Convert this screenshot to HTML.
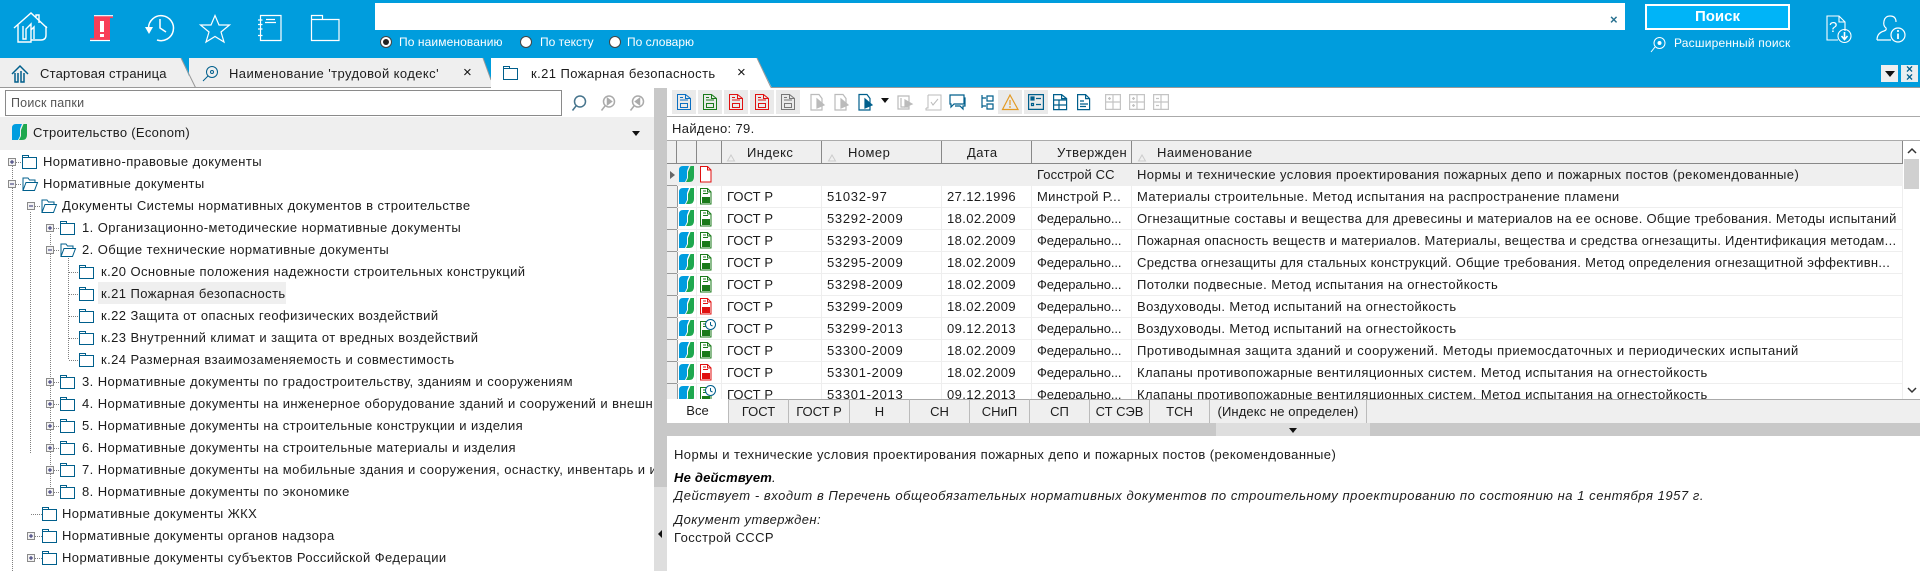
<!DOCTYPE html>
<html><head><meta charset="utf-8"><style>
html,body{margin:0;padding:0;width:1920px;height:571px;overflow:hidden;background:#fff}
body{position:relative;font-family:"Liberation Sans",sans-serif;font-size:13px;color:#1c1c1c}
.a{position:absolute}
.t{position:absolute;white-space:nowrap;line-height:16px;height:16px}
.w{color:#fff;font-size:12px}
svg{position:absolute;overflow:visible}
#tree,#grid{position:absolute;overflow:hidden}
#tree{left:0;top:150px;width:654px;height:421px}
#tree .t{font-size:13px;letter-spacing:.42px}
#grid{left:667px;top:141px;width:1236px;height:258px}
#grid .t{font-size:13px;letter-spacing:.1px;margin-top:1px}
#grid .hd{letter-spacing:.45px;margin-top:0}
#grid .n{letter-spacing:.7px}
#grid .d{letter-spacing:.4px}
#grid .f{letter-spacing:-.1px}
#grid .s{letter-spacing:.42px}
#grid .l{letter-spacing:.3px}
.h{background:#efefef;height:23px;top:0;border-right:1px solid #888;border-bottom:1px solid #888;position:absolute;box-sizing:border-box}
.tb{position:absolute;top:399px;height:24px;background:#efefef;border-right:1px solid #bbb;font-size:13px;text-align:center;line-height:24px;box-sizing:border-box;border-top:1px solid #aaa}
.v{position:absolute;width:1px;background:repeating-linear-gradient(#808080 0 1px,transparent 1px 2px)}
.z{position:absolute;height:1px;background:repeating-linear-gradient(90deg,#808080 0 1px,transparent 1px 2px)}
.dt{position:absolute;font-size:13px;letter-spacing:.42px;white-space:nowrap;line-height:16px;height:16px}
</style></head><body>
<svg width="0" height="0" style="position:absolute"><defs>
<g id="f"><path d="M.5 13.500V.5h6v2h8v11zM.5 2.500h6" fill="none" stroke="#005f8c" stroke-width="1"/></g>
<g id="o"><path d="M1 13.500V1h5l1.500 2H13v2.500M1 13.500h11.500L15.500 5.500H4z" fill="none" stroke="#005f8c" stroke-width="1"/></g>
<g id="p"><rect x=".5" y=".5" width="7" height="7" fill="#f2f2f2" stroke="#8a8a8a"/><path d="M2 4h4M4 2v4" stroke="#2c2c70"/></g>
<g id="m"><rect x=".5" y=".5" width="7" height="7" fill="#f2f2f2" stroke="#8a8a8a"/><path d="M2 4h4" stroke="#2c2c70"/></g>
<g id="b"><path d="M4 0H10L8 5V12L6 16H0V4Q0 0 4 0Z" fill="#009ddf"/><path d="M11.500 0H15V11Q15 16 10 16H7L9 12V6Z" fill="#1fa84f"/></g>
<g id="g"><path d="M.5.500h7l3.500 3.500V16H.5z" fill="#fff" stroke="#1a7a1a"/><path d="M7.500.500V4H11M3 3h3M3 5.500h5" fill="none" stroke="#1a7a1a"/><rect x="2" y="9" width="8" height="6" fill="#1a7a1a"/></g>
<g id="r"><path d="M.5.500h7l3.500 3.500V16H.5z" fill="#fff" stroke="#e01010"/><path d="M7.500.500V4H11M3 3h3M3 5.500h5" fill="none" stroke="#e01010"/><rect x="2" y="9" width="8" height="6" fill="#e01010"/></g>
<g id="c"><use href="#g"/><circle cx="10.500" cy="3.500" r="5" fill="#fff" stroke="#005f8c" stroke-width="1"/><path d="M10.500 1v3l2 1" fill="none" stroke="#005f8c"/></g>
<g id="d"><path d="M.5.500h8l5 4V15.500H.5z" fill="none" stroke="currentColor"/><path d="M8.500.500V4.500h5M3 3.500h3M3 6h8" fill="none" stroke="currentColor"/><rect x="3.500" y="9.500" width="7" height="4" fill="none" stroke="currentColor"/></g>
</defs></svg>

<!-- top bar -->
<div class="a" style="left:0;top:0;width:1920px;height:88px;background:#009ddd"></div>
<svg style="left:14px;top:12px" width="34" height="32" fill="none" stroke="#fff" stroke-width="1.400"><path d="M0 16 17 1l16 15M4 13V30H17V12L12 17V27H9V14M22 5V3h3v8M17 28h10q5 0 5-5V14M17 18l3-3v12"/></svg>
<svg style="left:90px;top:15px" width="24" height="26"><rect x="4" y="1" width="16" height="24" fill="#f83e58"/><path d="M4 .7H23M0 25.500H20" stroke="#fff" stroke-width="1.200"/><path d="M4 2.300H23M0 24H20" stroke="#f83e58" stroke-width="1.600"/><rect x="10" y="6" width="4" height="11" fill="#fff"/><rect x="10" y="19" width="4" height="3" fill="#fff"/></svg>
<svg style="left:145px;top:15px" width="29" height="28" fill="none" stroke="#fff" stroke-width="1.500"><path d="M3.500 13A12.500 12.500 0 1 1 12 25M15 4V13L21 17"/><path d="M0 12H8L4 19z" fill="#fff" stroke="none"/></svg>
<svg style="left:200px;top:15px" width="30" height="28" fill="none" stroke="#fff" stroke-width="1.200"><path d="M15 .5 19 10H29.500L21 17 24 27 15 21.500 6 27 9 17 .5 10H11Z"/></svg>
<svg style="left:258px;top:15px" width="24" height="26" fill="none" stroke="#fff" stroke-width="1.200"><path d="M2.500.5h20.500v25H2.500zM0 5h4.500M0 9.500h4.500M0 14h4.500M0 20.500h4.500M8 4.500h9M7 7.500h11"/></svg>
<svg style="left:311px;top:15px" width="29" height="26" fill="none" stroke="#fff" stroke-width="1.200"><path d="M.5.5h11v4H28v21H.5zM.5 4.500h11"/></svg>

<div class="a" style="left:375px;top:3px;width:1250px;height:27px;background:#fff"></div>
<div class="t" style="left:1610px;top:12px;font-size:13px;color:#27708f;font-weight:bold">×</div>
<svg style="left:380px;top:36px" width="12" height="12"><circle cx="6" cy="6" r="5.500" fill="#fff" stroke="#444"/><circle cx="6" cy="6" r="3" fill="#222"/></svg>
<div class="t w" style="left:399px;top:34px;letter-spacing:.1px">По наименованию</div>
<svg style="left:520px;top:36px" width="12" height="12"><circle cx="6" cy="6" r="5.500" fill="#fff" stroke="#444"/></svg>
<div class="t w" style="left:540px;top:34px">По тексту</div>
<svg style="left:609px;top:36px" width="12" height="12"><circle cx="6" cy="6" r="5.500" fill="#fff" stroke="#444"/></svg>
<div class="t w" style="left:627px;top:34px">По словарю</div>
<div class="a" style="left:1645px;top:4px;width:145px;height:26px;box-sizing:border-box;border:2px solid #fff;background:#00b4f8;color:#fff;font-weight:bold;font-size:15px;text-align:center;line-height:21px">Поиск</div>
<svg style="left:1650px;top:37px" width="16" height="15" fill="none" stroke="#fff" stroke-width="1"><circle cx="9.500" cy="6" r="5.500"/><path d="M5 10 1 15"/><circle cx="9.500" cy="6" r="1.500" fill="#fff"/></svg>
<div class="t w" style="left:1674px;top:35px;letter-spacing:.2px">Расширенный поиск</div>
<svg style="left:1826px;top:15px" width="26" height="28" fill="none" stroke="#fff" stroke-width="1.100"><path d="M12 25H1V1h12l6 6v9M13 1v6h6"/><circle cx="18.500" cy="21" r="6.500"/><path d="M18.500 17v7M15.500 21l3 3.500 3-3.500" stroke-width="1.600"/></svg>
<div class="t" style="left:1829px;top:20px;color:#fff;font-size:15px">?</div>
<svg style="left:1876px;top:15px" width="30" height="28" fill="none" stroke="#fff" stroke-width="1.200"><path d="M1 25q0-7 7-9 3-1 2-3-3-2-2-7 1-5 6-5 6 0 6 6M1 25h14"/><circle cx="22" cy="20" r="7"/><path d="M22 18.500v5.500M22 15v2" stroke-width="1.700"/></svg>

<!-- tabs -->
<svg style="left:0;top:58px" width="1920" height="30">
<path d="M0 0H491V30H0z" fill="#efefef"/>
<path d="M181 0H189V18z" fill="#009ddd"/>
<path d="M483 0H491V22z" fill="#009ddd"/>
<path d="M181 0 195.500 29.500M483 0 491 22" fill="none" stroke="#999"/>
<path d="M0 29.500H491" stroke="#999"/>
<path d="M491 0H757L772 30H491z" fill="#fff"/>
<path d="M757 0 771 29.500" stroke="#999" fill="none"/>
<path d="M771 29.500H1920" stroke="#999"/>
</svg>
<svg style="left:12px;top:65px" width="17" height="18" fill="none" stroke="#005f8c" stroke-width="1.500"><path d="M0 9 8 1l8 8M3 8v9h3V8M9 6v11h3V8"/></svg>
<div class="t" style="left:40px;top:66px;letter-spacing:.2px">Стартовая страница</div>
<svg style="left:202px;top:66px" width="17" height="15" fill="none" stroke="#005f8c" stroke-width="1"><circle cx="10" cy="6" r="5.500"/><path d="M6 10 1 15"/><circle cx="10" cy="6" r="1.500"/></svg>
<div class="t" style="left:229px;top:66px;letter-spacing:.42px">Наименование 'трудовой кодекс'</div>
<div class="t" style="left:463px;top:65px;font-size:15px;color:#111">×</div>
<svg style="left:503px;top:66px" width="17" height="15"><use href="#f"/></svg>
<div class="t" style="left:531px;top:66px;letter-spacing:.42px">к.21 Пожарная безопасность</div>
<div class="t" style="left:737px;top:65px;font-size:15px;color:#111">×</div>
<div class="a" style="left:1881px;top:65px;width:17px;height:17px;background:#efefef"></div>
<div class="a" style="left:1885px;top:71px;width:0;height:0;border:5px solid transparent;border-top:6px solid #111;border-bottom:0"></div>
<div class="a" style="left:1901px;top:65px;width:17px;height:17px;background:#e8eef0;color:#005f8c;font-size:12px;line-height:8px;text-align:center;font-weight:bold">×<br>×</div>

<!-- left panel -->
<div class="a" style="left:5px;top:90px;width:557px;height:26px;box-sizing:border-box;border:1px solid #8a8a8a;background:#fff"></div>
<div class="t" style="left:11px;top:95px;color:#555;font-size:12.500px;letter-spacing:.2px">Поиск папки</div>
<svg style="left:571px;top:95px" width="16" height="16" fill="none" stroke="#46748c" stroke-width="1.500"><circle cx="9" cy="6.500" r="5.500"/><path d="M5 11 1.500 15.500"/></svg>
<svg style="left:600px;top:95px" width="16" height="16" fill="none" stroke="#aaa" stroke-width="1.500"><circle cx="9" cy="6.500" r="5.500"/><path d="M5 11 1.500 15.500"/><path d="M7.500 3.500 11.500 6.500 7.500 9.500z" fill="#aaa"/></svg>
<svg style="left:629px;top:95px" width="16" height="16" fill="none" stroke="#aaa" stroke-width="1.500"><circle cx="9" cy="6.500" r="5.500"/><path d="M5 11 1.500 15.500"/><path d="M10.500 3.500 6.500 6.500 10.500 9.500z" fill="#aaa"/></svg>
<div class="a" style="left:0;top:117px;width:654px;height:33px;background:#efefef"></div>
<svg style="left:12px;top:124px" width="15" height="16"><use href="#b"/></svg>
<div class="t" style="left:33px;top:125px;letter-spacing:.3px">Строительство (Econom)</div>
<div class="a" style="left:632px;top:131px;width:0;height:0;border:4px solid transparent;border-top:5px solid #111;border-bottom:0"></div>

<div id="tree">
<div class="v" style="left:12px;top:16px;height:405px"></div>
<div class="v" style="left:30px;top:62px;height:242px"></div>
<div class="v" style="left:50px;top:84px;height:258px"></div>
<div class="v" style="left:68px;top:106px;height:104px"></div>
<div class="z" style="left:16px;top:12px;width:6px"></div>
<div class="z" style="left:16px;top:34px;width:6px"></div>
<div class="z" style="left:35px;top:56px;width:6px"></div>
<div class="z" style="left:54px;top:78px;width:6px"></div>
<div class="z" style="left:54px;top:100px;width:6px"></div>
<div class="z" style="left:69px;top:122px;width:10px"></div>
<div class="z" style="left:69px;top:144px;width:10px"></div>
<div class="z" style="left:69px;top:166px;width:10px"></div>
<div class="z" style="left:69px;top:188px;width:10px"></div>
<div class="z" style="left:69px;top:210px;width:10px"></div>
<div class="z" style="left:54px;top:232px;width:6px"></div>
<div class="z" style="left:54px;top:254px;width:6px"></div>
<div class="z" style="left:54px;top:276px;width:6px"></div>
<div class="z" style="left:54px;top:298px;width:6px"></div>
<div class="z" style="left:54px;top:320px;width:6px"></div>
<div class="z" style="left:54px;top:342px;width:6px"></div>
<div class="z" style="left:31px;top:364px;width:11px"></div>
<div class="z" style="left:35px;top:386px;width:7px"></div>
<div class="z" style="left:35px;top:408px;width:7px"></div>

<svg style="left:8px;top:8px" width="8" height="8"><use href="#p"/></svg>
<svg style="left:22px;top:5px" width="16" height="15"><use href="#f"/></svg>
<div class="t" style="left:43px;top:4px">Нормативно-правовые документы</div>

<svg style="left:8px;top:30px" width="8" height="8"><use href="#m"/></svg>
<svg style="left:22px;top:27px" width="16" height="15"><use href="#o"/></svg>
<div class="t" style="left:43px;top:26px">Нормативные документы</div>

<svg style="left:27px;top:52px" width="8" height="8"><use href="#m"/></svg>
<svg style="left:41px;top:49px" width="16" height="15"><use href="#o"/></svg>
<div class="t" style="left:62px;top:48px">Документы Системы нормативных документов в строительстве</div>

<svg style="left:46px;top:74px" width="8" height="8"><use href="#p"/></svg>
<svg style="left:60px;top:71px" width="16" height="15"><use href="#f"/></svg>
<div class="t" style="left:82px;top:70px">1. Организационно-методические нормативные документы</div>

<svg style="left:46px;top:96px" width="8" height="8"><use href="#m"/></svg>
<svg style="left:60px;top:93px" width="16" height="15"><use href="#o"/></svg>
<div class="t" style="left:82px;top:92px">2. Общие технические нормативные документы</div>

<svg style="left:79px;top:115px" width="16" height="15"><use href="#f"/></svg>
<div class="t" style="left:101px;top:114px">к.20 Основные положения надежности строительных конструкций</div>
<div class="a" style="left:98px;top:132px;width:188px;height:22px;background:#efefef"></div>
<svg style="left:79px;top:137px" width="16" height="15"><use href="#f"/></svg>
<div class="t" style="left:101px;top:136px">к.21 Пожарная безопасность</div>
<svg style="left:79px;top:159px" width="16" height="15"><use href="#f"/></svg>
<div class="t" style="left:101px;top:158px">к.22 Защита от опасных геофизических воздействий</div>
<svg style="left:79px;top:181px" width="16" height="15"><use href="#f"/></svg>
<div class="t" style="left:101px;top:180px">к.23 Внутренний климат и защита от вредных воздействий</div>
<svg style="left:79px;top:203px" width="16" height="15"><use href="#f"/></svg>
<div class="t" style="left:101px;top:202px">к.24 Размерная взаимозаменяемость и совместимость</div>

<svg style="left:46px;top:228px" width="8" height="8"><use href="#p"/></svg>
<svg style="left:60px;top:225px" width="16" height="15"><use href="#f"/></svg>
<div class="t" style="left:82px;top:224px">3. Нормативные документы по градостроительству, зданиям и сооружениям</div>
<svg style="left:46px;top:250px" width="8" height="8"><use href="#p"/></svg>
<svg style="left:60px;top:247px" width="16" height="15"><use href="#f"/></svg>
<div class="t" style="left:82px;top:246px">4. Нормативные документы на инженерное оборудование зданий и сооружений и внешние</div>
<svg style="left:46px;top:272px" width="8" height="8"><use href="#p"/></svg>
<svg style="left:60px;top:269px" width="16" height="15"><use href="#f"/></svg>
<div class="t" style="left:82px;top:268px">5. Нормативные документы на строительные конструкции и изделия</div>
<svg style="left:46px;top:294px" width="8" height="8"><use href="#p"/></svg>
<svg style="left:60px;top:291px" width="16" height="15"><use href="#f"/></svg>
<div class="t" style="left:82px;top:290px">6. Нормативные документы на строительные материалы и изделия</div>
<svg style="left:46px;top:316px" width="8" height="8"><use href="#p"/></svg>
<svg style="left:60px;top:313px" width="16" height="15"><use href="#f"/></svg>
<div class="t" style="left:82px;top:312px">7. Нормативные документы на мобильные здания и сооружения, оснастку, инвентарь и инструмент</div>
<svg style="left:46px;top:338px" width="8" height="8"><use href="#p"/></svg>
<svg style="left:60px;top:335px" width="16" height="15"><use href="#f"/></svg>
<div class="t" style="left:82px;top:334px">8. Нормативные документы по экономике</div>

<svg style="left:42px;top:357px" width="16" height="15"><use href="#f"/></svg>
<div class="t" style="left:62px;top:356px">Нормативные документы ЖКХ</div>
<svg style="left:27px;top:382px" width="8" height="8"><use href="#p"/></svg>
<svg style="left:42px;top:379px" width="16" height="15"><use href="#f"/></svg>
<div class="t" style="left:62px;top:378px">Нормативные документы органов надзора</div>
<svg style="left:27px;top:404px" width="8" height="8"><use href="#p"/></svg>
<svg style="left:42px;top:401px" width="16" height="15"><use href="#f"/></svg>
<div class="t" style="left:62px;top:400px">Нормативные документы субъектов Российской Федерации</div>
</div>

<!-- splitter -->
<div class="a" style="left:654px;top:88px;width:13px;height:483px;background:#dedede"></div>
<div class="a" style="left:654px;top:88px;width:13px;height:399px;background:#c8c8c8"></div>
<div class="a" style="left:658px;top:530px;width:0;height:0;border:4px solid transparent;border-right:4px solid #111;border-left:0"></div>

<!-- toolbar -->
<div class="a" style="left:667px;top:116px;width:1253px;height:1px;background:#aaa"></div>
<div class="a" style="left:672px;top:90px;width:24px;height:24px;background:#eaeaea"></div>
<div class="a" style="left:698px;top:90px;width:24px;height:24px;background:#eaeaea"></div>
<div class="a" style="left:724px;top:90px;width:24px;height:24px;background:#eaeaea"></div>
<div class="a" style="left:750px;top:90px;width:24px;height:24px;background:#eaeaea"></div>
<div class="a" style="left:776px;top:90px;width:24px;height:24px;background:#eaeaea"></div>
<div class="a" style="left:998px;top:90px;width:24px;height:24px;background:#eaeaea"></div>
<div class="a" style="left:1024px;top:90px;width:24px;height:24px;background:#eaeaea"></div>
<svg style="left:677px;top:94px;color:#0a6fc2" width="14" height="16"><use href="#d"/></svg>
<svg style="left:703px;top:94px;color:#1a7a1a" width="14" height="16"><use href="#d"/></svg>
<svg style="left:729px;top:94px;color:#e01010" width="14" height="16"><use href="#d"/></svg>
<svg style="left:755px;top:94px;color:#e01010" width="14" height="16"><use href="#d"/></svg>
<svg style="left:781px;top:94px;color:#777" width="14" height="16"><use href="#d"/></svg>
<svg style="left:810px;top:94px" width="20" height="17" fill="none" stroke="#bbb" stroke-width="1.200"><path d="M1 .5h8l3 4V16H1z"/><path d="M7 5l7 6-7 3z" fill="#bbb"/></svg>
<svg style="left:834px;top:94px" width="20" height="17" fill="none" stroke="#bbb" stroke-width="1.200"><path d="M1 .5h8l3 4V16H1z"/><path d="M7 5l7 6-7 3z" fill="#bbb"/></svg>
<svg style="left:858px;top:94px" width="20" height="17" fill="none" stroke="#005f8c" stroke-width="1.200"><path d="M1 .5h8l3 4V16H1z"/><path d="M7 5l7 6-7 3z" fill="#005f8c"/></svg>
<div class="a" style="left:881px;top:98px;width:0;height:0;border:4px solid transparent;border-top:5px solid #111;border-bottom:0"></div>
<svg style="left:897px;top:95px" width="20" height="16" fill="none" stroke="#bbb" stroke-width="1.200"><path d="M1 1h11v13H1zM4 3v9h8"/><path d="M8 5l7 4-7 3z" fill="#bbb"/></svg>
<svg style="left:925px;top:94px" width="17" height="17" fill="none" stroke="#bbb" stroke-width="1"><path d="M3 1h13v15H1v-2M3 1v13H1M6 8l2 3 5-6"/></svg>
<svg style="left:949px;top:94px" width="17" height="16" fill="none" stroke="#005f8c" stroke-width="1.200"><path d="M1 1h14v9H5l-3 3v-3H1zM15 4h1v8h-2v3l-3-3H6"/></svg>
<svg style="left:981px;top:94px" width="14" height="16" fill="none" stroke="#005f8c" stroke-width="1.200"><path d="M1 1v13M1 4h4M1 12h4M6 2h6v5H6zM6 10h6v5H6z"/></svg>
<svg style="left:1002px;top:94px" width="17" height="16" fill="none" stroke="#e39a24" stroke-width="1.200"><path d="M8 1 16 15.500H.5zM8 6v5M8 12v2"/></svg>
<svg style="left:1028px;top:94px" width="16" height="16" fill="none" stroke="#005f8c" stroke-width="1.200"><path d="M.6.6h14.800v14.800H.6zM8 4.500h5M8 10.500h5M3.500 9.500h2v2h-2z"/><rect x="3" y="3" width="3" height="3" fill="#005f8c"/></svg>
<svg style="left:1053px;top:94px" width="14" height="16" fill="none" stroke="#005f8c" stroke-width="1.200"><path d="M.6.6h8l5 4v11H.6zM.6 6h13M.6 11h13M6 6v9M8.600.6v4h5"/></svg>
<svg style="left:1077px;top:94px" width="14" height="16" fill="none" stroke="#005f8c" stroke-width="1.200"><path d="M.6.6h8l4 4v11H.6zM8.600.6v4h4M3 7h4M3 10h8M3 12.500h6"/></svg>
<svg style="left:1105px;top:94px" width="16" height="16" fill="none" stroke="#c4c4c4" stroke-width="1.200"><path d="M.6.6h14.800v14.800H.6zM.6 8h14.800M8 .6v14.800M3 4.500h3M4.500 3v3"/></svg>
<svg style="left:1129px;top:94px" width="16" height="16" fill="none" stroke="#c4c4c4" stroke-width="1.200"><path d="M.6.6h14.800v14.800H.6zM.6 8h14.800M8 .6v14.800M3 4.500h3M4.500 3v3M3 11.500h3M4.500 10v3"/></svg>
<svg style="left:1153px;top:94px" width="16" height="16" fill="none" stroke="#c4c4c4" stroke-width="1.200"><path d="M.6.6h14.800v14.800H.6zM.6 8h14.800M8 .6v14.800M3 4.500h3M3 11.500h3"/></svg>

<div class="t" style="left:672px;top:121px;letter-spacing:.35px;font-size:13px">Найдено: 79.</div>
<div class="a" style="left:667px;top:140px;width:1253px;height:1px;background:#aaa"></div>

<!-- grid -->
<div class="a" style="left:667px;top:141px;width:10px;height:258px;background:#efefef;border-right:1px solid #999"></div>
<div id="grid">
<div class="h" style="left:0;width:10px"></div>
<div class="h" style="left:10px;width:20px"></div>
<div class="h" style="left:30px;width:25px"></div>
<div class="h" style="left:55px;width:100px"></div>
<div class="h" style="left:155px;width:120px"></div>
<div class="h" style="left:275px;width:90px"></div>
<div class="h" style="left:365px;width:100px"></div>
<div class="h" style="left:465px;width:771px"></div>
<div class="t hd" style="left:80px;top:4px">Индекс</div>
<div class="t hd" style="left:181px;top:4px">Номер</div>
<div class="t hd" style="left:300px;top:4px">Дата</div>
<div class="t hd" style="left:390px;top:4px">Утвержден</div>
<div class="t hd" style="left:490px;top:4px">Наименование</div>
<svg style="left:60px;top:13px" width="8" height="8"><path d="M4 1 7.500 7H.5z" fill="none" stroke="#ccc"/></svg>
<svg style="left:161px;top:13px" width="8" height="8"><path d="M4 1 7.500 7H.5z" fill="none" stroke="#ccc"/></svg>
<svg style="left:471px;top:13px" width="8" height="8"><path d="M4 1 7.500 7H.5z" fill="none" stroke="#ccc"/></svg>

<div class="a" style="left:10px;top:23px;width:1226px;height:22px;background:#efefef"></div>
<div class="a" style="left:3px;top:30px;width:0;height:0;border:4px solid transparent;border-left:5px solid #666;border-right:0"></div>

<div class="a" style="left:0;top:44px;width:10px;height:1px;background:#999"></div>
<div class="a" style="left:0;top:66px;width:10px;height:1px;background:#999"></div>
<div class="a" style="left:0;top:88px;width:10px;height:1px;background:#999"></div>
<div class="a" style="left:0;top:110px;width:10px;height:1px;background:#999"></div>
<div class="a" style="left:0;top:132px;width:10px;height:1px;background:#999"></div>
<div class="a" style="left:0;top:154px;width:10px;height:1px;background:#999"></div>
<div class="a" style="left:0;top:176px;width:10px;height:1px;background:#999"></div>
<div class="a" style="left:0;top:198px;width:10px;height:1px;background:#999"></div>
<div class="a" style="left:0;top:220px;width:10px;height:1px;background:#999"></div>
<div class="a" style="left:0;top:242px;width:10px;height:1px;background:#999"></div>

<div class="a" style="left:10px;top:66px;width:1226px;height:1px;background:#eee"></div>
<div class="a" style="left:10px;top:88px;width:1226px;height:1px;background:#eee"></div>
<div class="a" style="left:10px;top:110px;width:1226px;height:1px;background:#eee"></div>
<div class="a" style="left:10px;top:132px;width:1226px;height:1px;background:#eee"></div>
<div class="a" style="left:10px;top:154px;width:1226px;height:1px;background:#eee"></div>
<div class="a" style="left:10px;top:176px;width:1226px;height:1px;background:#eee"></div>
<div class="a" style="left:10px;top:198px;width:1226px;height:1px;background:#eee"></div>
<div class="a" style="left:10px;top:220px;width:1226px;height:1px;background:#eee"></div>
<div class="a" style="left:10px;top:242px;width:1226px;height:1px;background:#eee"></div>
<div class="a" style="left:29px;top:45px;width:1px;height:213px;background:#eee"></div>
<div class="a" style="left:54px;top:45px;width:1px;height:213px;background:#eee"></div>
<div class="a" style="left:154px;top:45px;width:1px;height:213px;background:#eee"></div>
<div class="a" style="left:274px;top:45px;width:1px;height:213px;background:#eee"></div>
<div class="a" style="left:364px;top:45px;width:1px;height:213px;background:#eee"></div>
<div class="a" style="left:464px;top:45px;width:1px;height:213px;background:#eee"></div>
<div class="a" style="left:1235px;top:45px;width:1px;height:213px;background:#eee"></div>

<svg style="left:12px;top:25px" width="15" height="16"><use href="#b"/></svg>
<svg style="left:33px;top:25px" width="12" height="17"><path d="M.5.500h7l3.500 3.500V16H.5z" fill="#fff" stroke="#e01010"/><path d="M7.500.500V4H11" fill="none" stroke="#e01010"/></svg>
<div class="t" style="left:370px;top:25px">Госстрой СС</div>
<div class="t s" style="left:470px;top:25px">Нормы и технические условия проектирования пожарных депо и пожарных постов (рекомендованные)</div>

<svg style="left:12px;top:47px" width="15" height="16"><use href="#b"/></svg><svg style="left:33px;top:47px" width="12" height="17"><use href="#g"/></svg>
<div class="t" style="left:60px;top:47px">ГОСТ Р</div><div class="t n" style="left:160px;top:47px">51032-97</div><div class="t d" style="left:280px;top:47px">27.12.1996</div><div class="t" style="left:370px;top:47px;letter-spacing:.3px">Минстрой Р...</div><div class="t s" style="left:470px;top:47px">Материалы строительные. Метод испытания на распространение пламени</div>

<svg style="left:12px;top:69px" width="15" height="16"><use href="#b"/></svg><svg style="left:33px;top:69px" width="12" height="17"><use href="#g"/></svg>
<div class="t" style="left:60px;top:69px">ГОСТ Р</div><div class="t n" style="left:160px;top:69px">53292-2009</div><div class="t d" style="left:280px;top:69px">18.02.2009</div><div class="t f" style="left:370px;top:69px">Федерально...</div><div class="t l" style="left:470px;top:69px">Огнезащитные составы и вещества для древесины и материалов на ее основе. Общие требования. Методы испытаний</div>

<svg style="left:12px;top:91px" width="15" height="16"><use href="#b"/></svg><svg style="left:33px;top:91px" width="12" height="17"><use href="#g"/></svg>
<div class="t" style="left:60px;top:91px">ГОСТ Р</div><div class="t n" style="left:160px;top:91px">53293-2009</div><div class="t d" style="left:280px;top:91px">18.02.2009</div><div class="t f" style="left:370px;top:91px">Федерально...</div><div class="t l" style="left:470px;top:91px">Пожарная опасность веществ и материалов. Материалы, вещества и средства огнезащиты. Идентификация методам...</div>

<svg style="left:12px;top:113px" width="15" height="16"><use href="#b"/></svg><svg style="left:33px;top:113px" width="12" height="17"><use href="#g"/></svg>
<div class="t" style="left:60px;top:113px">ГОСТ Р</div><div class="t n" style="left:160px;top:113px">53295-2009</div><div class="t d" style="left:280px;top:113px">18.02.2009</div><div class="t f" style="left:370px;top:113px">Федерально...</div><div class="t l" style="left:470px;top:113px">Средства огнезащиты для стальных конструкций. Общие требования. Метод определения огнезащитной эффективн...</div>

<svg style="left:12px;top:135px" width="15" height="16"><use href="#b"/></svg><svg style="left:33px;top:135px" width="12" height="17"><use href="#g"/></svg>
<div class="t" style="left:60px;top:135px">ГОСТ Р</div><div class="t n" style="left:160px;top:135px">53298-2009</div><div class="t d" style="left:280px;top:135px">18.02.2009</div><div class="t f" style="left:370px;top:135px">Федерально...</div><div class="t s" style="left:470px;top:135px">Потолки подвесные. Метод испытания на огнестойкость</div>

<svg style="left:12px;top:157px" width="15" height="16"><use href="#b"/></svg><svg style="left:33px;top:157px" width="12" height="17"><use href="#r"/></svg>
<div class="t" style="left:60px;top:157px">ГОСТ Р</div><div class="t n" style="left:160px;top:157px">53299-2009</div><div class="t d" style="left:280px;top:157px">18.02.2009</div><div class="t f" style="left:370px;top:157px">Федерально...</div><div class="t s" style="left:470px;top:157px">Воздуховоды. Метод испытаний на огнестойкость</div>

<svg style="left:12px;top:179px" width="15" height="16"><use href="#b"/></svg><svg style="left:33px;top:180px" width="16" height="17"><use href="#c"/></svg>
<div class="t" style="left:60px;top:179px">ГОСТ Р</div><div class="t n" style="left:160px;top:179px">53299-2013</div><div class="t d" style="left:280px;top:179px">09.12.2013</div><div class="t f" style="left:370px;top:179px">Федерально...</div><div class="t s" style="left:470px;top:179px">Воздуховоды. Метод испытаний на огнестойкость</div>

<svg style="left:12px;top:201px" width="15" height="16"><use href="#b"/></svg><svg style="left:33px;top:201px" width="12" height="17"><use href="#g"/></svg>
<div class="t" style="left:60px;top:201px">ГОСТ Р</div><div class="t n" style="left:160px;top:201px">53300-2009</div><div class="t d" style="left:280px;top:201px">18.02.2009</div><div class="t f" style="left:370px;top:201px">Федерально...</div><div class="t s" style="left:470px;top:201px;letter-spacing:.48px">Противодымная защита зданий и сооружений. Методы приемосдаточных и периодических испытаний</div>

<svg style="left:12px;top:223px" width="15" height="16"><use href="#b"/></svg><svg style="left:33px;top:223px" width="12" height="17"><use href="#r"/></svg>
<div class="t" style="left:60px;top:223px">ГОСТ Р</div><div class="t n" style="left:160px;top:223px">53301-2009</div><div class="t d" style="left:280px;top:223px">18.02.2009</div><div class="t f" style="left:370px;top:223px">Федерально...</div><div class="t s" style="left:470px;top:223px">Клапаны противопожарные вентиляционных систем. Метод испытания на огнестойкость</div>

<svg style="left:12px;top:245px" width="15" height="16"><use href="#b"/></svg><svg style="left:33px;top:246px" width="16" height="17"><use href="#c"/></svg>
<div class="t" style="left:60px;top:245px">ГОСТ Р</div><div class="t n" style="left:160px;top:245px">53301-2013</div><div class="t d" style="left:280px;top:245px">09.12.2013</div><div class="t f" style="left:370px;top:245px">Федерально...</div><div class="t s" style="left:470px;top:245px">Клапаны противопожарные вентиляционных систем. Метод испытания на огнестойкость</div>
</div>

<!-- grid scrollbar -->
<div class="a" style="left:1904px;top:159px;width:15px;height:30px;background:#d0d0d0"></div>
<svg style="left:1907px;top:147px" width="10" height="7" fill="none" stroke="#333" stroke-width="1.500"><path d="M1 6 5 2l4 4"/></svg>
<svg style="left:1907px;top:387px" width="10" height="7" fill="none" stroke="#333" stroke-width="1.500"><path d="M1 1l4 4 4-4"/></svg>

<!-- index tabs -->
<div class="a" style="left:667px;top:399px;width:1253px;height:24px;background:#efefef;border-top:1px solid #aaa;box-sizing:border-box"></div>
<div class="tb" style="left:667px;width:62px;background:#fff;border-top:0">Все</div>
<div class="tb" style="left:729px;width:60px">ГОСТ</div>
<div class="tb" style="left:789px;width:61px">ГОСТ Р</div>
<div class="tb" style="left:850px;width:60px">Н</div>
<div class="tb" style="left:910px;width:60px">СН</div>
<div class="tb" style="left:970px;width:60px">СНиП</div>
<div class="tb" style="left:1030px;width:60px">СП</div>
<div class="tb" style="left:1090px;width:60px">СТ СЭВ</div>
<div class="tb" style="left:1150px;width:60px">ТСН</div>
<div class="tb" style="left:1210px;width:157px;letter-spacing:.1px">(Индекс не определен)</div>
<div class="a" style="left:667px;top:423px;width:1253px;height:13px;background:#c8c8c8"></div>
<div class="a" style="left:1216px;top:423px;width:154px;height:13px;background:#dedede"></div>
<div class="a" style="left:1289px;top:428px;width:0;height:0;border:4px solid transparent;border-top:5px solid #111;border-bottom:0"></div>

<!-- details -->
<div class="dt" style="left:674px;top:447px">Нормы и технические условия проектирования пожарных депо и пожарных постов (рекомендованные)</div>
<div class="dt" style="left:674px;top:470px;font-weight:bold;font-style:italic;color:#000;letter-spacing:.2px">Не действует<span style="font-weight:normal">.</span></div>
<div class="dt" style="left:674px;top:488px;font-style:italic;letter-spacing:.55px">Действует - входит в Перечень общеобязательных нормативных документов по строительному проектированию по состоянию на 1 сентября 1957 г.</div>
<div class="dt" style="left:674px;top:512px;font-style:italic">Документ утвержден:</div>
<div class="dt" style="left:674px;top:530px">Госстрой СССР</div>
</body></html>
